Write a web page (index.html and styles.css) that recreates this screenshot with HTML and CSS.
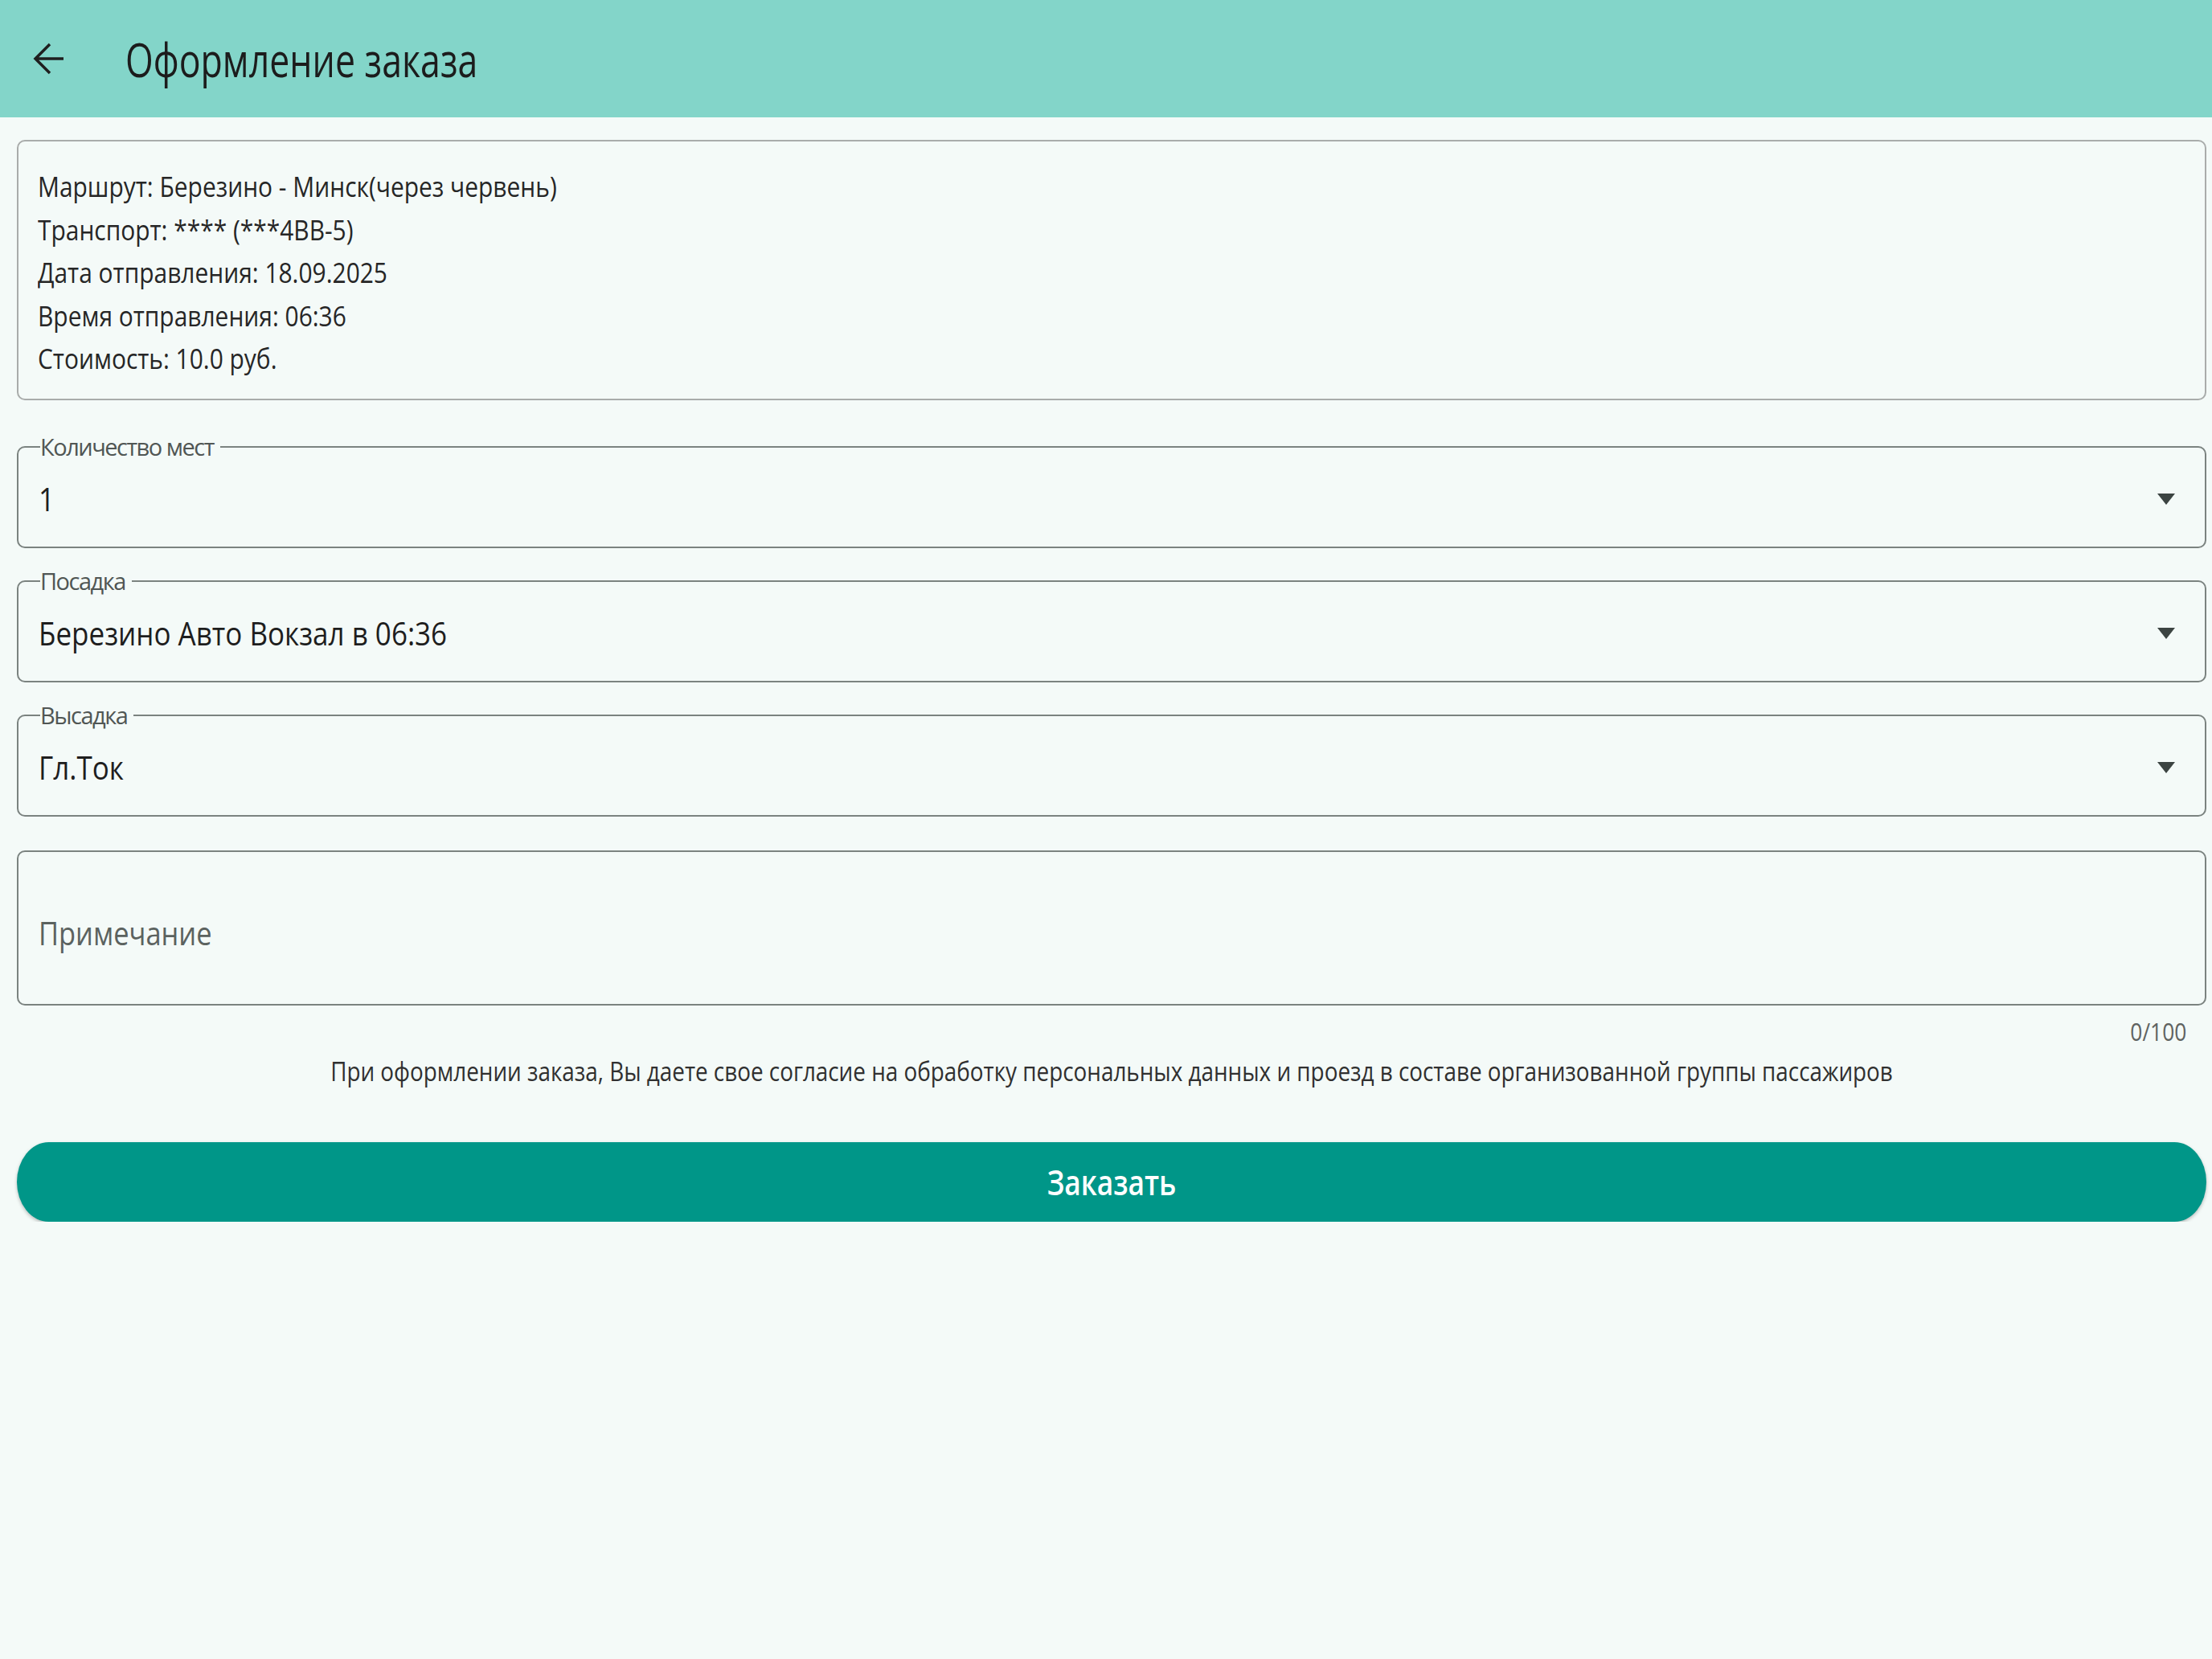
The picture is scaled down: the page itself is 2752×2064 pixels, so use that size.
FILE: index.html
```html
<!DOCTYPE html>
<html lang="ru">
<head>
    <meta charset="UTF-8">
    <title>Оформление заказа</title>
    <link rel="stylesheet" href="styles.css">
</head>
<body>
    <div class="app">
        <header class="topbar">
            <button class="back" type="button" aria-label="Назад">
                <svg width="40" height="40" viewBox="0 0 40 40"><path d="M38 20H3M21 2L3 20l18 18" fill="none" stroke="#1f1f1f" stroke-width="3.5"/></svg>
            </button>
            <h1 class="title">Оформление заказа</h1>
        </header>
        <main class="content">
            <section class="info">
                <p>Маршрут: Березино - Минск(через червень)</p>
                <p>Транспорт: **** (***4BB-5)</p>
                <p>Дата отправления: 18.09.2025</p>
                <p>Время отправления: 06:36</p>
                <p>Стоимость: 10.0 руб.</p>
            </section>
            <fieldset class="field">
                <legend>Количество мест</legend>
                <span class="value">1</span>
                <svg class="caret" width="22" height="14" viewBox="0 0 22 14"><path d="M0 0h22L11 14z" fill="#3c4442"/></svg>
            </fieldset>
            <fieldset class="field">
                <legend>Посадка</legend>
                <span class="value">Березино Авто Вокзал в 06:36</span>
                <svg class="caret" width="22" height="14" viewBox="0 0 22 14"><path d="M0 0h22L11 14z" fill="#3c4442"/></svg>
            </fieldset>
            <fieldset class="field">
                <legend>Высадка</legend>
                <span class="value">Гл.Ток</span>
                <svg class="caret" width="22" height="14" viewBox="0 0 22 14"><path d="M0 0h22L11 14z" fill="#3c4442"/></svg>
            </fieldset>
            <div class="note">
                <span class="placeholder">Примечание</span>
            </div>
            <div class="counter">0/100</div>
            <p class="consent">При оформлении заказа, Вы даете свое согласие на обработку персональных данных и проезд в составе организованной группы пассажиров</p>
            <button class="order" type="button"><span>Заказать</span></button>
        </main>
    </div>
</body>
</html>
```

FILE: styles.css
```css
body {
    margin: 0;
    padding: 0;
    background: #f4faf8;
    font-family: "Open Sans", "Noto Sans", sans-serif;
    color: #222;
}
.app {
    width: 2752px;
}
.topbar {
    height: 146px;
    background: #83d5c9;
    display: flex;
    align-items: center;
}
.back {
    width: 40px;
    height: 40px;
    margin: 0 0 0 41px;
    padding: 0;
    border: none;
    background: none;
    display: flex;
}
.title {
    margin: 0 0 0 75px;
    font-size: 58px;
    font-weight: 400;
    color: #1c1c1c;
    transform: scaleX(0.77);
    transform-origin: left center;
}
.content {
    padding: 28px 7px 0 21px;
    display: flex;
    flex-direction: column;
}
.info {
    border: 2px solid #a9acab;
    border-radius: 10px;
    padding: 30px 24px 22px;
}
.info p {
    margin: 0;
    font-size: 34px;
    line-height: 53.5px;
    color: #262626;
    transform: scaleX(0.88);
    transform-origin: left center;
}
.field {
    margin: 43px 0 0;
    padding: 26px 37px 35px 25px;
    border: 2px solid #7b8380;
    border-radius: 10px;
    display: flex;
    align-items: center;
    justify-content: space-between;
}
.field + .field {
    margin-top: 26px;
}
.field legend {
    margin-left: 2px;
    padding: 0 8px 0 0;
    font-size: 29px;
    line-height: 30px;
    letter-spacing: -1.5px;
    color: #505654;
}
.value {
    display: inline-block;
    font-size: 40px;
    line-height: 48px;
    color: #1e1e1e;
    transform: scaleX(0.875);
    transform-origin: left center;
}
.note {
    margin-top: 42px;
    height: 189px;
    border: 2px solid #7b8380;
    border-radius: 10px;
    padding: 0 25px;
    display: flex;
    align-items: center;
}
.placeholder {
    display: inline-block;
    margin-top: 12px;
    font-size: 40px;
    color: #5b625f;
    transform: scaleX(0.86);
    transform-origin: left center;
}
.counter {
    align-self: flex-end;
    margin: 12px 25px 0 0;
    font-size: 31px;
    line-height: 40px;
    color: #5f6361;
    transform: scaleX(0.85);
    transform-origin: right center;
}
.consent {
    margin: 5px 0 0;
    text-align: center;
    font-size: 32px;
    line-height: 50px;
    color: #303030;
    transform: scaleX(0.87);
}
.order {
    margin-top: 63px;
    height: 99px;
    border: none;
    border-radius: 40px / 50px;
    background: #009688;
    color: #fff;
    font-family: inherit;
    font-size: 43px;
    font-weight: 600;
    box-shadow: 0 2px 4px rgba(0, 0, 0, 0.25);
}
.order span {
    display: inline-block;
    transform: scaleX(0.82);
}
```
